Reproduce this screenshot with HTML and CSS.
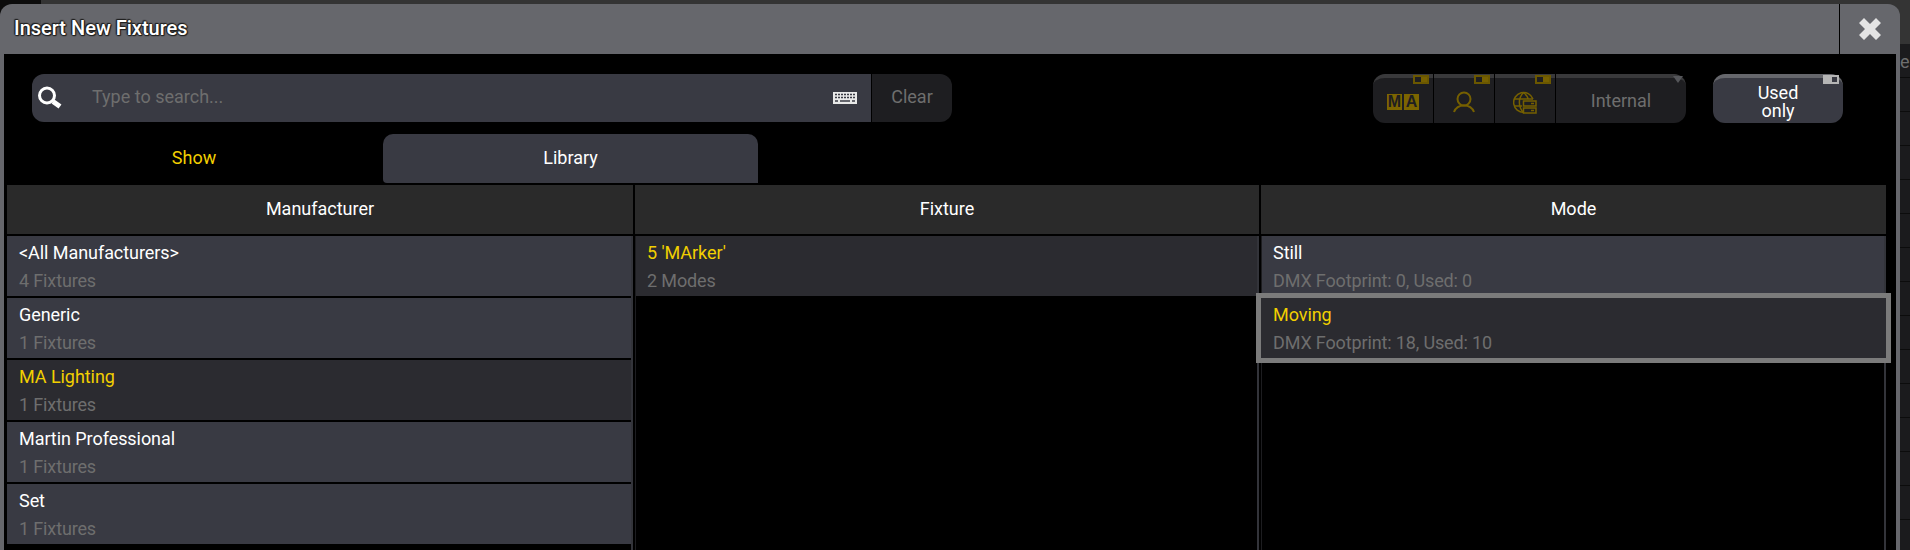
FILE: index.html
```html
<!DOCTYPE html>
<html>
  <head>
    <title>Insert New Fixtures</title>
    <link rel="stylesheet" href="styles.css">
  </head>
  <body>
    <div class="window">
      <div class="titlebar">
        <div class="title">Insert New Fixtures</div>
        <div class="close">
          <svg width="24" height="24" viewBox="0 0 24 24">
            <path d="M6 1 12 7 18 1 23 6 17 12 23 18 18 23 12 17 6 23 1 18 7 12 1 6Z" fill="#e4e4e4"/>
          </svg>
        </div>
      </div>

      <div class="content">
        <div class="toolbar">
          <div class="search">
            <div class="search-field">
              <svg class="search-icon" width="26" height="26" viewBox="0 0 26 26">
                <circle cx="10" cy="10.500" r="7.500" fill="none" stroke="#fff" stroke-width="3"/>
                <path d="M16 16.500 L23 21.500" stroke="#fff" stroke-width="5"/>
              </svg>
              <span class="placeholder">Type to search...</span>
              <svg class="keyboard" width="24" height="12" viewBox="0 0 24 12">
                <rect width="24" height="12" fill="#e8e8e8"/>
                <path d="M2 2.500h20M2 5.500h20" stroke="#3a3b44" stroke-width="1.500" stroke-dasharray="2 1"/>
                <path d="M2 9h3M7 9h10M19 9h3" stroke="#3a3b44" stroke-width="1.500"/>
              </svg>
            </div>
            <div class="clear">Clear</div>
          </div>

          <div class="sources">
            <div class="source source-ma">
              <span class="toggle"></span>
              <span class="ma-logo"><span>M</span><span>A</span></span>
            </div>
            <div class="source source-user">
              <span class="toggle"></span>
              <svg width="22" height="24" viewBox="0 0 22 24" fill="none" stroke="#766000" stroke-width="2">
                <circle cx="11" cy="8" r="6.500"/>
                <path d="M1 21C3 16 7 14.500 11 14.500S19 16 21 21"/>
              </svg>
            </div>
            <div class="source source-net">
              <span class="toggle"></span>
              <svg width="24" height="24" viewBox="0 0 24 24" fill="none" stroke="#766000" stroke-width="1.500">
                <path d="M11 21.500A10 10 0 1 1 20 8"/>
                <path d="M10.500 1.500C5 7 5 16 10.500 21.500M10.500 1.500C13.500 4 15 7 15 8M1 8H20M1 15H9"/>
                <rect x="10.500" y="10" width="12.500" height="5" fill="#1e1e21"/>
                <rect x="10.500" y="17" width="12.500" height="5" fill="#1e1e21"/>
                <path d="M18 12.500h3M18 19.500h3"/>
              </svg>
            </div>
            <div class="source source-name">
              <span class="corner"></span>
              Internal
            </div>
          </div>

          <div class="used">
            <span class="toggle toggle-light"></span>
            Used<br>only
          </div>
        </div>

        <div class="tabs">
          <div class="tab tab-show">Show</div>
          <div class="tab tab-library">Library</div>
        </div>

        <div class="table">
          <div class="column col-manufacturer">
            <div class="column-head">Manufacturer</div>
            <div class="column-body">
              <div class="row"><div class="name">&lt;All Manufacturers&gt;</div><div class="info">4 Fixtures</div></div>
              <div class="row"><div class="name">Generic</div><div class="info">1 Fixtures</div></div>
              <div class="row row-active"><div class="name">MA Lighting</div><div class="info">1 Fixtures</div></div>
              <div class="row"><div class="name">Martin Professional</div><div class="info">1 Fixtures</div></div>
              <div class="row"><div class="name">Set</div><div class="info">1 Fixtures</div></div>
            </div>
          </div>
          <div class="column col-fixture">
            <div class="column-head">Fixture</div>
            <div class="column-body">
              <div class="row row-active"><div class="name">5 'MArker'</div><div class="info">2 Modes</div></div>
            </div>
          </div>
          <div class="column col-mode">
            <div class="column-head">Mode</div>
            <div class="column-body">
              <div class="row"><div class="name">Still</div><div class="info">DMX Footprint: 0, Used: 0</div></div>
              <div class="row row-active row-focus"><div class="name">Moving</div><div class="info">DMX Footprint: 18, Used: 10</div></div>
            </div>
          </div>
        </div>
      </div>
    </div>

    <div class="side">
      <span class="side-letter">e</span>
    </div>
  </body>
</html>
```

FILE: styles.css
```css
html,
body {
  height: 100%;
  margin: 0;
  overflow: hidden;
}
body {
  display: flex;
  background: linear-gradient(90deg, #0c0c0c 41px, #343434 41px);
  font-family: Roboto, "Liberation Sans", sans-serif;
  font-size: 18px;
  color: #fff;
}
.window {
  display: flex;
  flex-direction: column;
  flex: 0 0 1900px;
  margin-top: 4px;
  border-radius: 12px 12px 0 0;
  background-color: #66676c;
}
.titlebar {
  display: flex;
  flex: 0 0 50px;
}
.title {
  flex: 1;
  padding-left: 14px;
  font-size: 20px;
  font-weight: 500;
  line-height: 48px;
  text-shadow: -1px 0 1px #222, 1px 0 1px #222, 0 -1px 1px #222, 0 1px 1px #222, -1px -1px 1px #222, 1px 1px 1px #222;
}
.close {
  display: flex;
  flex: 0 0 61px;
  box-sizing: border-box;
  justify-content: center;
  align-items: center;
  border-left: 1px solid #000;
}
.content {
  display: flex;
  flex-direction: column;
  flex: 1;
  min-height: 0;
  margin: 0 4px;
  background-color: #000;
}

/* search row */
.toolbar {
  display: flex;
  padding: 20px 53px 0 28px;
}
.search {
  display: flex;
  width: 920px;
  height: 48px;
  gap: 1px;
}
.search-field {
  display: flex;
  flex: 1;
  align-items: center;
  padding: 0 14px 0 4px;
  border-radius: 12px 0 0 12px;
  background-color: #393a43;
}
.search-icon {
  margin-right: 29px;
  margin-left: 1px;
}
.placeholder {
  flex: 1;
  padding-bottom: 4px;
  color: #6e6e6e;
}
.clear {
  flex: 0 0 80px;
  border-radius: 0 12px 12px 0;
  background-color: #1e1e21;
  color: #6e6e6e;
  line-height: 46px;
  text-align: center;
}
.sources {
  display: flex;
  height: 49px;
  margin-left: auto;
  gap: 1px;
}
.source {
  position: relative;
  display: flex;
  justify-content: center;
  align-items: center;
  box-sizing: border-box;
  width: 60px;
  padding-top: 4px;
  border-top: 4px solid #39393b;
  background-color: #1e1e21;
}
.source-ma {
  padding-top: 3px;
  border-radius: 12px 0 0 12px;
}
.source-name {
  width: 130px;
  padding-top: 0;
  border-radius: 0 12px 12px 0;
  color: #6e6e6e;
}
.toggle {
  position: absolute;
  top: -3px;
  right: 4px;
  box-sizing: border-box;
  width: 16px;
  height: 9px;
  border: 2px solid #6a5700;
  background: linear-gradient(90deg, #1e1e21 50%, #766000 50%);
}
.corner {
  position: absolute;
  top: -2px;
  right: 3px;
  border-top: 7px solid #55565a;
  border-right: 5px solid transparent;
  border-left: 5px solid transparent;
}
.ma-logo {
  display: flex;
  gap: 2px;
  font-family: "Liberation Sans", sans-serif;
  font-size: 16px;
  font-weight: 700;
  color: #1e1e21;
}
.ma-logo span {
  width: 15px;
  line-height: 16px;
  background-color: #7c6500;
  text-align: center;
}
.used {
  position: relative;
  box-sizing: border-box;
  width: 130px;
  height: 49px;
  margin-left: 27px;
  padding-top: 6px;
  border-top: 4px solid #66676c;
  border-radius: 12px;
  background-color: #393a43;
  line-height: 18px;
  text-align: center;
}
.used .toggle-light {
  border-color: #b5b5b5;
  background: linear-gradient(90deg, #b5b5b5 60%, #393a43 60%);
}

/* tabs */
.tabs {
  display: flex;
  flex: 0 0 49px;
  margin-top: 11px;
}
.tab {
  line-height: 48px;
  text-align: center;
}
.tab-show {
  box-sizing: border-box;
  width: 379px;
  padding-left: 1px;
  color: #f2cf00;
}
.tab-library {
  width: 375px;
  border-radius: 10px 10px 0 4px;
  background-color: #393a43;
}

/* lists */
.table {
  display: flex;
  flex: 1;
  min-height: 0;
  margin: 2px 0 0 3px;
  gap: 2px;
}
.column {
  display: flex;
  flex-direction: column;
}
.col-manufacturer {
  width: 626px;
}
.col-fixture {
  width: 624px;
}
.col-mode {
  width: 625px;
}
.column-head {
  flex: 0 0 49px;
  margin-bottom: 2px;
  background-color: #2a2a2a;
  line-height: 47px;
  text-align: center;
}
.column-body {
  display: flex;
  flex-direction: column;
  flex: 1;
  gap: 2px;
  border-right: 2px solid #33343a;
  border-left: 1px solid #1d1d20;
}
.col-manufacturer .column-body {
  border-left: 0;
}
.row {
  flex: 0 0 60px;
  box-sizing: border-box;
  padding: 6px 11px 0;
  background-color: #393a43;
}
.col-manufacturer .row {
  padding-left: 12px;
}
.name {
  line-height: 22px;
  letter-spacing: -0.06px;
}
.info {
  margin-top: 6px;
  line-height: 22px;
  letter-spacing: -0.14px;
  color: #6e6e6e;
}
.row-active {
  background-color: #2b2b30;
}
.row-active .name {
  color: #f2cf00;
}
.row-focus {
  position: relative;
  margin-right: -2px;
  margin-left: -1px;
  padding-left: 12px;
  outline: 5px solid #7b7b7b;
}

/* whatever sits behind the popup */
.side {
  flex: 1;
  margin-top: 44px;
  overflow: hidden;
  background: repeating-linear-gradient(180deg, #1b1b1d 0 33px, #0c0c0c 33px 34px) 0 0;
}
.side-letter {
  display: block;
  margin-top: 6px;
  color: #6e6e6e;
  line-height: 24px;
}
```
